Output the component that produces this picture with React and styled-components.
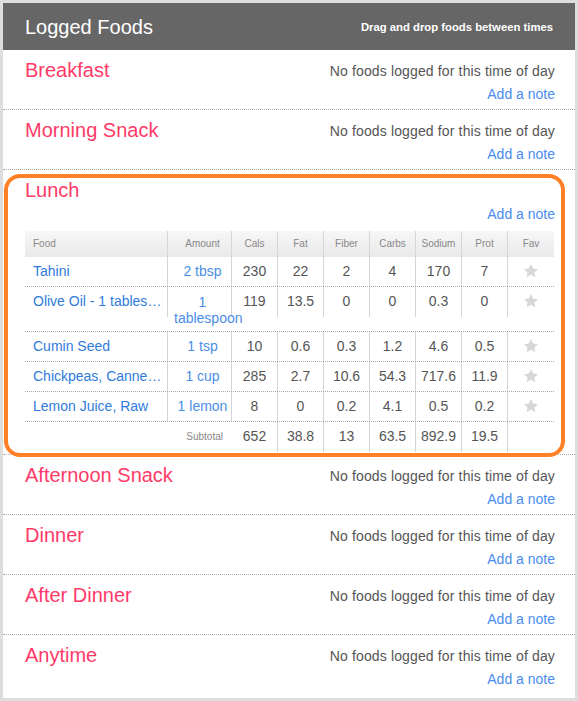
import React from 'react';
import styled, { createGlobalStyle, css } from 'styled-components';

const GlobalStyle = createGlobalStyle`
  html, body {
    margin: 0;
    padding: 0;
    background: #fff;
  }
  body {
    font-family: "Liberation Sans", Arial, sans-serif;
  }
  * {
    box-sizing: border-box;
  }
`;

const Panel = styled.div`
  width: 578px;
  border: 3px solid #dddddd;
  padding-bottom: 3px;
  background: #fff;
`;

const Header = styled.div`
  height: 47px;
  background: #666666;
  display: flex;
  align-items: center;
  justify-content: space-between;
  padding: 0 22px;
  color: #fff;
`;

const HeaderTitle = styled.h2`
  margin: 0;
  font-size: 20px;
  font-weight: normal;
  line-height: 24px;
`;

const HeaderHint = styled.span`
  font-size: 11.3px;
  font-weight: bold;
`;

const Section = styled.div`
  position: relative;
  min-height: 60px;
  padding: 8px 20px ${({ $highlight }) => ($highlight ? '2px' : '0')} 22px;
  border-bottom: ${({ $last }) => ($last ? 'none' : '1px dotted #a8a8a8')};

  ${({ $highlight }) =>
    $highlight &&
    css`
      &::after {
        content: '';
        position: absolute;
        left: 1px;
        top: 4px;
        right: 10px;
        bottom: -3px;
        border: 4px solid #ff8027;
        border-radius: 16px;
        pointer-events: none;
      }
    `}
`;

const SectionHead = styled.div`
  display: flex;
  justify-content: space-between;
  align-items: flex-start;
`;

const MealTitle = styled.h3`
  margin: 0;
  font-size: 20px;
  font-weight: normal;
  line-height: 24px;
  color: #ff3a68;
`;

const SideColumn = styled.div`
  display: flex;
  flex-direction: column;
  align-items: flex-end;
  gap: 3px;
  padding-top: 3px;
`;

const Status = styled.div`
  height: 20px;
  font-size: 14px;
  line-height: 20px;
  letter-spacing: 0.14px;
  color: #555;
`;

const NoteLink = styled.a`
  font-size: 14px;
  line-height: 20px;
  color: #4a8cf0;
  text-decoration: none;
  cursor: pointer;
`;

const columns = '143px 64px repeat(7, 46px)';

const Table = styled.div`
  margin-top: 7px;
  width: 529px;
`;

const HeadRow = styled.div`
  display: grid;
  grid-template-columns: ${columns};
  height: 26px;
  background: linear-gradient(#f7f7f7, #e9e9e9);
`;

const HeadCell = styled.div`
  font-size: 10px;
  line-height: 26px;
  color: #888;
  text-align: ${({ $align }) => $align || 'center'};
  padding-left: ${({ $pl }) => $pl || 0}px;
  border-right: ${({ $noBorder }) => ($noBorder ? 'none' : '1px solid #d6d6d6')};
`;

const Row = styled.div`
  display: grid;
  grid-template-columns: ${columns};
  align-items: start;
  height: ${({ $height }) => $height}px;
  border-bottom: ${({ $noBorder }) => ($noBorder ? 'none' : '1px dotted #a8a8a8')};
`;

const Cell = styled.div`
  height: ${({ $h }) => $h || 29}px;
  line-height: 29px;
  font-size: 14px;
  color: #555;
  text-align: center;
  white-space: nowrap;
  border-right: ${({ $noBorder }) => ($noBorder ? 'none' : '1px solid #d4d4d4')};
`;

const FoodCell = styled(Cell)`
  text-align: left;
  padding: 0 5px 0 8px;
  overflow: hidden;
  text-overflow: ellipsis;
  color: #2f7bdb;
`;

const AmountCell = styled(Cell)`
  padding-left: 6px;
  color: #4a8ee6;
  white-space: normal;
  overflow: visible;
  ${({ $wrap }) =>
    $wrap &&
    css`
      line-height: 16px;
      padding-top: 7px;
    `}
`;

const SubtotalLabel = styled.div`
  grid-column: span 2;
  height: 30px;
  line-height: 30px;
  font-size: 10px;
  color: #888;
  text-align: right;
  padding-right: 9px;
`;

const StarIcon = styled.svg`
  width: 16px;
  height: 16px;
  fill: #d7d7d7;
  vertical-align: middle;
  margin-top: -3px;
`;

const Star = () => (
  <StarIcon viewBox="0 0 24 24" xmlns="http://www.w3.org/2000/svg">
    <path d="M12 1.5l3.2 6.9 7.3.8-5.4 5 1.5 7.3L12 17.8l-6.6 3.7 1.5-7.3-5.4-5 7.3-.8z" />
  </StarIcon>
);

const meals = [
  { name: 'Breakfast' },
  { name: 'Morning Snack' },
  { name: 'Lunch', foods: true },
  { name: 'Afternoon Snack' },
  { name: 'Dinner' },
  { name: 'After Dinner' },
  { name: 'Anytime' },
];

const foods = [
  { name: 'Tahini', amount: '2 tbsp', values: ['230', '22', '2', '4', '170', '7'] },
  { name: 'Olive Oil - 1 tablespoon', amount: '1 tablespoon', values: ['119', '13.5', '0', '0', '0.3', '0'], wrap: true },
  { name: 'Cumin Seed', amount: '1 tsp', values: ['10', '0.6', '0.3', '1.2', '4.6', '0.5'] },
  { name: 'Chickpeas, Canned, Drained', amount: '1 cup', values: ['285', '2.7', '10.6', '54.3', '717.6', '11.9'] },
  { name: 'Lemon Juice, Raw', amount: '1 lemon', values: ['8', '0', '0.2', '4.1', '0.5', '0.2'] },
];

const subtotal = ['652', '38.8', '13', '63.5', '892.9', '19.5'];

const nutrientHeads = ['Cals', 'Fat', 'Fiber', 'Carbs', 'Sodium', 'Prot'];

const FoodTable = () => (
  <Table>
    <HeadRow>
      <HeadCell $align="left" $pl={8}>Food</HeadCell>
      <HeadCell $pl={6}>Amount</HeadCell>
      {nutrientHeads.map((h) => (
        <HeadCell key={h}>{h}</HeadCell>
      ))}
      <HeadCell $noBorder>Fav</HeadCell>
    </HeadRow>

    {foods.map((food) => {
      const h = food.wrap ? 30 : 29;
      return (
        <Row key={food.name} $height={food.wrap ? 45 : 30}>
          <FoodCell $h={h}>{food.name}</FoodCell>
          <AmountCell $h={h} $wrap={food.wrap}>
            {food.amount}
          </AmountCell>
          {food.values.map((v, i) => (
            <Cell key={i} $h={h}>
              {v}
            </Cell>
          ))}
          <Cell $h={h} $noBorder>
            <Star />
          </Cell>
        </Row>
      );
    })}

    <Row $height={30} $noBorder>
      <SubtotalLabel>Subtotal</SubtotalLabel>
      {subtotal.map((v, i) => (
        <Cell key={i} $h={30}>
          {v}
        </Cell>
      ))}
      <Cell $h={30} $noBorder />
    </Row>
  </Table>
);

const App = () => {
  return (
    <>
      <GlobalStyle />
      <Panel>
        <Header>
          <HeaderTitle>Logged Foods</HeaderTitle>
          <HeaderHint>Drag and drop foods between times</HeaderHint>
        </Header>

        {meals.map((meal, i) => (
          <Section key={meal.name} $highlight={meal.foods} $last={i === meals.length - 1}>
            <SectionHead>
              <MealTitle>{meal.name}</MealTitle>
              <SideColumn>
                <Status>{meal.foods ? '' : 'No foods logged for this time of day'}</Status>
                <NoteLink>Add a note</NoteLink>
              </SideColumn>
            </SectionHead>
            {meal.foods && <FoodTable />}
          </Section>
        ))}
      </Panel>
    </>
  );
};

export default App;
